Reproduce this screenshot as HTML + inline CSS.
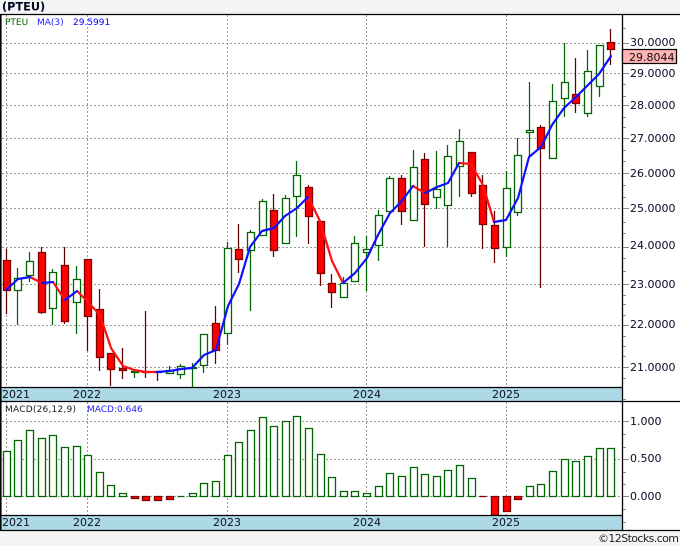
<!DOCTYPE html>
<html lang="en">
<head>
<meta charset="utf-8">
<title>PTEU</title>
<style>
html,body{margin:0;padding:0;background:#f4f4f4}
svg{display:block}
text{font-family:"DejaVu Sans","Liberation Sans",sans-serif}
</style>
</head>
<body>
<svg width="680" height="546" viewBox="0 0 680 546" xmlns="http://www.w3.org/2000/svg">
<rect width="680" height="546" fill="#f4f4f4"/>
<rect x="0" y="14" width="680" height="516" fill="#fff"/>
<text x="2" y="10.5" font-size="11.3" font-weight="bold" fill="#000820">(PTEU)</text>

<!-- grid -->
<path fill="none" stroke="#999" stroke-dasharray="2 2" d="M2 43.5H622M2 73.5H622M2 105.5H622M2 138.5H622M2 173.5H622M2 208.5H622M2 247.5H622M2 284.5H622M2 325.5H622M2 367.5H622M2 421.5H622M2 459.5H622M2 496.5H622M6.5 15V388M87.5 15V388M227.5 15V388M366.5 15V388M506.5 15V388M6.5 402V515M87.5 402V515M227.5 402V515M366.5 402V515M506.5 402V515"/>

<!-- wicks -->
<path fill="none" stroke="#006400" stroke-width="1.25" d="M17.5 268V325M29.5 252V282M52.5 269V325M76.5 266V334M134.5 371V378M169.5 366V373M180.5 364V379M192.5 363V387M203.5 334V373M227.5 242V345M250.5 230V311M262.5 199V236M285.5 195V243M296.5 161V237M343.5 277V297M354.5 236V281M366.5 236V291M378.5 210V261M389.5 176V211M413.5 150V220M436.5 151V209M447.5 145V247M459.5 129V197M506.5 171V257M517.5 138V216M529.5 82V157M552.5 84V158M564.5 43V117M587.5 50V117M599.5 45V97"/>
<path fill="none" stroke="#600000" stroke-width="1.25" d="M6.5 249V314M41.5 247V314M64.5 247V324M87.5 259V351M99.5 289V371M110.5 353V386M122.5 348V379M145.5 311V378M157.5 371V381M215.5 306V364M238.5 224V273M273.5 194V257M308.5 185V244M320.5 221V286M331.5 274V308M401.5 175V225M424.5 153V247M471.5 152V197M482.5 175V249M494.5 211V263M540.5 125V288M575.5 58V113M610.5 29V65"/>

<!-- green bodies -->
<path fill="#fff" stroke="#006400" stroke-width="1.3" d="M14.5 278.5h7v12h-7zM26.5 261.5h7v14h-7zM49.5 272.5h7v36h-7zM73.5 279.5h7v23h-7zM131.5 371.5h7v1h-7zM166.5 370.5h7v3h-7zM177.5 366.5h7v8h-7zM189.5 367.5h7v1h-7zM200.5 334.5h7v31h-7zM224.5 248.5h7v85h-7zM247.5 232.5h7v18h-7zM259.5 201.5h7v34h-7zM282.5 198.5h7v45h-7zM293.5 175.5h7v21h-7zM340.5 283.5h7v14h-7zM351.5 243.5h7v38h-7zM363.5 249.5h7v3h-7zM375.5 215.5h7v30h-7zM386.5 178.5h7v33h-7zM410.5 167.5h7v53h-7zM433.5 189.5h7v8h-7zM444.5 156.5h7v49h-7zM456.5 141.5h7v25h-7zM503.5 188.5h7v59h-7zM514.5 155.5h7v57h-7zM526.5 130.5h7v2h-7zM549.5 101.5h7v57h-7zM561.5 82.5h7v16h-7zM584.5 71.5h7v42h-7zM596.5 45.5h7v41h-7z"/>
<!-- red bodies -->
<path fill="#f00" stroke="#800000" stroke-width="1.3" d="M3.5 260.5h7v30h-7zM38.5 252.5h7v60h-7zM61.5 265.5h7v56h-7zM84.5 259.5h7v57h-7zM96.5 309.5h7v48h-7zM107.5 353.5h7v16h-7zM119.5 368.5h7v2h-7zM142.5 371.5h7v1h-7zM154.5 371.5h7v1h-7zM212.5 323.5h7v27h-7zM235.5 249.5h7v10h-7zM270.5 210.5h7v40h-7zM305.5 187.5h7v29h-7zM317.5 221.5h7v52h-7zM328.5 283.5h7v9h-7zM398.5 178.5h7v33h-7zM421.5 159.5h7v45h-7zM468.5 152.5h7v41h-7zM479.5 185.5h7v39h-7zM491.5 225.5h7v23h-7zM537.5 127.5h7v21h-7zM572.5 94.5h7v9h-7zM607.5 42.5h7v7h-7z"/>

<!-- moving average -->
<g fill="none" stroke-width="2.2" stroke-linejoin="round" stroke-linecap="round">
<g stroke="#ff1010">
<polyline points="30,277 42,283"/>
<polyline points="53,282 65,300"/>
<polyline points="77,291 88,302 100,315 111,348 123,366 134,370 146,372 157,372"/>
<polyline points="308,197 320,221 332,261 343,283"/>
<polyline points="413,186 425,193"/>
<polyline points="459,163 471,164 483,185 494,222"/>
</g>
<g stroke="#1010ff">
<polyline points="6,290 18,279 30,277"/>
<polyline points="42,283 53,282"/>
<polyline points="65,300 77,291"/>
<polyline points="157,372 170,371 181,369 192,368 204,355 216,350 228,306 239,284 250,247 262,231 274,228 285,216 297,208 308,197"/>
<polyline points="343,283 355,273 367,258 378,235 390,213 401,202 413,186"/>
<polyline points="425,193 437,187 448,183 459,163"/>
<polyline points="494,222 506,220 518,198 529,157 541,147 552,125 564,108 576,97 587,86 599,74 611,56"/>
</g>
</g>

<!-- MACD bars -->
<path fill="#fff" stroke="#006400" stroke-width="1.3" d="M3.5 451.5h7v45h-7zM14.5 440.5h7v56h-7zM26.5 430.5h7v66h-7zM38.5 438.5h7v58h-7zM49.5 435.5h7v61h-7zM61.5 447.5h7v49h-7zM73.5 446.5h7v50h-7zM84.5 455.5h7v41h-7zM96.5 472.5h7v24h-7zM107.5 485.5h7v11h-7zM119.5 493.5h7v3h-7zM177.5 496.5h7M189.5 493.5h7v3h-7zM200.5 483.5h7v13h-7zM212.5 481.5h7v15h-7zM224.5 455.5h7v41h-7zM235.5 442.5h7v54h-7zM247.5 430.5h7v66h-7zM259.5 417.5h7v79h-7zM270.5 426.5h7v70h-7zM282.5 421.5h7v75h-7zM293.5 416.5h7v80h-7zM305.5 428.5h7v68h-7zM317.5 454.5h7v42h-7zM328.5 477.5h7v19h-7zM340.5 491.5h7v5h-7zM351.5 491.5h7v5h-7zM363.5 493.5h7v3h-7zM375.5 486.5h7v10h-7zM386.5 473.5h7v23h-7zM398.5 476.5h7v20h-7zM410.5 467.5h7v29h-7zM421.5 474.5h7v22h-7zM433.5 476.5h7v20h-7zM444.5 470.5h7v26h-7zM456.5 465.5h7v31h-7zM468.5 478.5h7v18h-7zM526.5 486.5h7v10h-7zM537.5 484.5h7v12h-7zM549.5 471.5h7v25h-7zM561.5 459.5h7v37h-7zM572.5 461.5h7v35h-7zM584.5 456.5h7v40h-7zM596.5 448.5h7v48h-7zM607.5 448.5h7v48h-7z"/>
<path fill="#f00" stroke="#800000" stroke-width="1.3" d="M131.5 496.5h7v2h-7zM142.5 496.5h7v4h-7zM154.5 496.5h7v4h-7zM166.5 496.5h7v3h-7zM479.5 496.5h7M491.5 496.5h7v19h-7zM503.5 496.5h7v15h-7zM514.5 496.5h7v3h-7z"/>

<!-- bands -->
<rect x="1" y="388" width="621" height="13" fill="#add8e6"/>
<rect x="1" y="516" width="621" height="14" fill="#add8e6"/>

<!-- frame -->
<path fill="none" stroke="#000" stroke-width="1.3" d="M0 14.5H680M0 401.5H680M0 530.5H680M0 387.5H622M0 515.5H622M622.5 14V530"/>
<rect x="0" y="14" width="1.6" height="517" fill="#000"/>

<!-- axis ticks -->
<path fill="none" stroke="#888" d="M623 28.5h3M623 61.5h3M623 84.5h3M623 96.5h3M623 117.5h3M623 127.5h3M623 150.5h3M623 161.5h3M623 185.5h3M623 197.5h3M623 222.5h3M623 233.5h3M623 258.5h3M623 271.5h3M623 295.5h3M623 304.5h3M623 315.5h3M623 336.5h3M623 346.5h3M623 356.5h3M623 378.5h3M623 399.5h3M623 434.5h3M623 447.5h3M623 472.5h3M623 484.5h3M623 509.5h3M623 522.5h3M623 43.5h6M623 73.5h6M623 105.5h6M623 138.5h6M623 173.5h6M623 208.5h6M623 247.5h6M623 284.5h6M623 325.5h6M623 367.5h6M623 421.5h6M623 459.5h6M623 496.5h6"/>

<!-- axis labels -->
<g font-size="11" fill="#0a0a2a">
<text x="630" y="46">30.0000</text>
<text x="630" y="77">29.0000</text>
<text x="630" y="109">28.0000</text>
<text x="630" y="142">27.0000</text>
<text x="630" y="177">26.0000</text>
<text x="630" y="212">25.0000</text>
<text x="630" y="249">24.0000</text>
<text x="630" y="288">23.0000</text>
<text x="630" y="328">22.0000</text>
<text x="630" y="371">21.0000</text>
<text x="630" y="425">1.000</text>
<text x="630" y="462">0.500</text>
<text x="630" y="500">0.000</text>
</g>
<rect x="622.5" y="49.5" width="54" height="14" fill="#ffb3b3" stroke="#000" stroke-width="1.2"/>
<text x="629" y="61" font-size="11" fill="#101010">29.8044</text>

<!-- years -->
<g font-size="11" fill="#101028">
<text x="2" y="398">2021</text><text x="73" y="398">2022</text><text x="213" y="398">2023</text><text x="353" y="398">2024</text><text x="492" y="398">2025</text>
<text x="2" y="526">2021</text><text x="73" y="526">2022</text><text x="213" y="526">2023</text><text x="353" y="526">2024</text><text x="492" y="526">2025</text>
</g>

<!-- legends -->
<g font-size="9">
<text x="5" y="25" fill="#006400">PTEU</text>
<text x="37" y="25" fill="#2020ff">MA(3)</text>
<text x="73" y="25" fill="#0000ff">29.5991</text>
<text x="5" y="412" fill="#202020" textLength="71">MACD(26,12,9)</text>
<text x="87" y="412" fill="#2020ff">MACD:0.646</text>
</g>

<text x="598" y="542" font-size="11" fill="#202020" textLength="81">©12Stocks.com</text>
</svg>
</body>
</html>
